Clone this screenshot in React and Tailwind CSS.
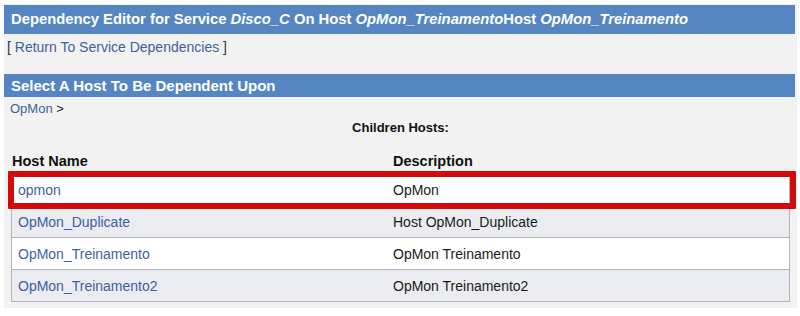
export default function App() {
  const rows = [
    { name: "opmon", desc: "OpMon", bg: "bg-white" },
    { name: "OpMon_Duplicate", desc: "Host OpMon_Duplicate", bg: "bg-[#ebecf1]" },
    { name: "OpMon_Treinamento", desc: "OpMon Treinamento", bg: "bg-white" },
    { name: "OpMon_Treinamento2", desc: "OpMon Treinamento2", bg: "bg-[#ebecf1]" },
  ];
  return (
    <div className="w-[800px] h-[316px] bg-white pt-[4px] pl-[4px] font-['Liberation_Sans',Arial,sans-serif]">
      <div className="w-[793px] h-[304px] bg-[#f2f2f3] pt-[1px] flex flex-col">
        <div className="h-[29px] mr-[2px] bg-[#5586c2] px-[7px] flex items-center text-white font-bold text-[14.8px] leading-none">
          <span>
            Dependency Editor for Service <i>Disco_C</i> On Host <i>OpMon_Treinamento</i>Host{" "}
            <i>OpMon_Treinamento</i>
          </span>
        </div>
        <div className="mt-[5px] h-[16px] pl-[3px] text-[14px] leading-[16px] text-[#333]">
          [ <span className="text-[#3f5f9d]">Return To Service Dependencies</span> ]
        </div>
        <div className="mt-[19px] h-[23px] mr-[2px] bg-[#5586c2] px-[7px] flex items-center text-white font-bold text-[15px] leading-none">
          Select A Host To Be Dependent Upon
        </div>
        <div className="mt-[4px] h-[16px] pl-[6px] text-[13px] leading-[16px] text-[#222]">
          <span className="text-[#3f5f9d]">OpMon</span> &gt;
        </div>
        <div className="mt-[3px] h-[16px] text-center font-bold text-[13px] leading-[16px] text-[#111]">
          Children Hosts:
        </div>
        <div className="mt-[17px] ml-[7px] w-[779px] grid grid-cols-[376px_1fr] h-[17px] text-[14.5px] leading-[17px] font-bold text-[#111]">
          <div className="pl-[1px]">Host Name</div>
          <div className="pl-[6px]">Description</div>
        </div>
        <div className="relative mt-[3px] ml-[7px] w-[779px] border-t border-[#b4b4b8]">
          {rows.map((r) => (
            <div
              key={r.name}
              className={`grid grid-cols-[375px_1fr] h-[32px] border-x border-b border-[#b4b4b8] ${r.bg} text-[14px]`}
            >
              <div className="pl-[6px] pt-[1px] flex items-center text-[#3f5f9d]">{r.name}</div>
              <div className="pl-[6px] pt-[1px] flex items-center text-[#1a1a1a]">{r.desc}</div>
            </div>
          ))}
          <div className="absolute left-[-3px] top-[-3px] w-[788px] h-[38px] border-[6px] border-[#d20a0a] rounded-[1px]" />
        </div>
      </div>
    </div>
  );
}
